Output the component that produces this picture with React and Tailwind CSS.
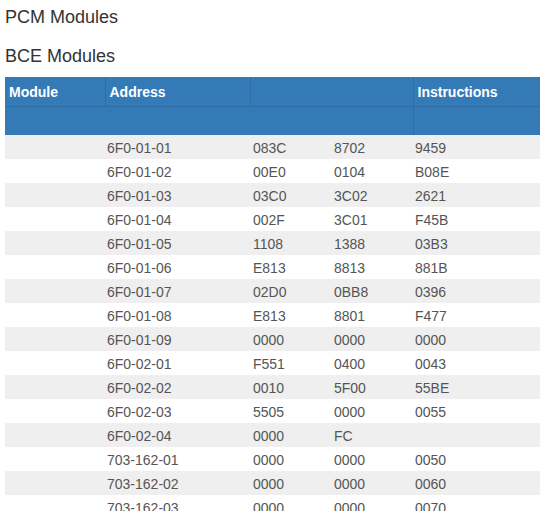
import React from "react";

const rows = [
  ["6F0-01-01", "083C", "8702", "9459"],
  ["6F0-01-02", "00E0", "0104", "B08E"],
  ["6F0-01-03", "03C0", "3C02", "2621"],
  ["6F0-01-04", "002F", "3C01", "F45B"],
  ["6F0-01-05", "1108", "1388", "03B3"],
  ["6F0-01-06", "E813", "8813", "881B"],
  ["6F0-01-07", "02D0", "0BB8", "0396"],
  ["6F0-01-08", "E813", "8801", "F477"],
  ["6F0-01-09", "0000", "0000", "0000"],
  ["6F0-02-01", "F551", "0400", "0043"],
  ["6F0-02-02", "0010", "5F00", "55BE"],
  ["6F0-02-03", "5505", "0000", "0055"],
  ["6F0-02-04", "0000", "FC", ""],
  ["703-162-01", "0000", "0000", "0050"],
  ["703-162-02", "0000", "0000", "0060"],
  ["703-162-03", "0000", "0000", "0070"],
];

function App() {
  return (
    <div className="h-[511px] overflow-hidden bg-white pl-[5px] pt-[7px] font-['Liberation_Sans',Arial,sans-serif]">
      <h3 className="text-[18px] leading-[20px] text-[#333]">PCM Modules</h3>
      <h3 className="mt-[19px] text-[18px] leading-[20px] text-[#333]">BCE Modules</h3>

      {/* BCE table */}
      <table className="mt-[11px] w-full table-fixed border-collapse text-[14px] leading-[20px]">
        <colgroup>
          <col className="w-[100px]" />
          <col className="w-[145px]" />
          <col className="w-[81px]" />
          <col className="w-[82px]" />
          <col />
        </colgroup>
        <thead className="bg-[#337ab7] text-left font-bold text-white">
          <tr className="h-[29px] border-b border-[#2e6da4]">
            <th className="border-r border-[#2e6da4] pl-[4px] pt-[5px] pb-[3px] align-top">Module</th>
            <th className="border-r border-[#2e6da4] pl-[4px] pt-[5px] pb-[3px] align-top">Address</th>
            <th colSpan={2} className="border-r border-[#2e6da4]"></th>
            <th className="pl-[4px] pt-[5px] pb-[3px] align-top">Instructions</th>
          </tr>
          <tr className="h-[29px]">
            <th colSpan={4} className="border-r border-[#2e6da4]"></th>
            <th></th>
          </tr>
        </thead>
        <tbody className="text-[#555]">
          {rows.map((r, i) => (
            <tr key={i} className={i % 2 === 0 ? "h-[24px] bg-[#efefef]" : "h-[24px] bg-white"}>
              <td className="px-[2px] pt-[3px] pb-[1px]"></td>
              <td className="px-[2px] pt-[3px] pb-[1px]">{r[0]}</td>
              <td className="px-[3px] pt-[3px] pb-[1px]">{r[1]}</td>
              <td className="px-[3px] pt-[3px] pb-[1px]">{r[2]}</td>
              <td className="px-[2px] pt-[3px] pb-[1px]">{r[3]}</td>
            </tr>
          ))}
        </tbody>
      </table>
    </div>
  );
}

export default App;
